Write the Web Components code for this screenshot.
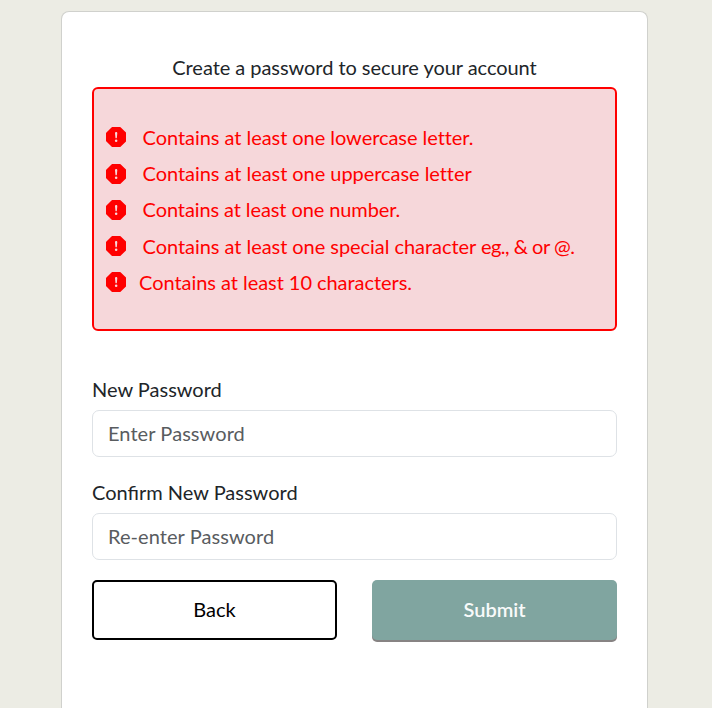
<!DOCTYPE html>
<html lang="en">
<head>
<meta charset="utf-8">
<title>Create a password</title>
<style>
    body {
        margin: 0;
        height: 708px;
        overflow: hidden;
        background: #ecece4;
        color: #212529;
        font: 20px/30px Lato, sans-serif;
    }
    .example {
        letter-spacing: -0.5px;
    }
</style>
</head>
<body>
<password-card>
    <span slot="title">Create a password to secure your account</span>
    <rule-list>
        <password-rule>Contains at least one lowercase letter.</password-rule>
        <password-rule>Contains at least one uppercase letter</password-rule>
        <password-rule style="letter-spacing: -0.1px">Contains at least one number.</password-rule>
        <password-rule>Contains at least one special character <span class="example">eg., &amp; or @.</span></password-rule>
        <password-rule style="--gap: 12.8px">Contains at least 10 characters.</password-rule>
    </rule-list>
    <password-field label="New Password" placeholder="Enter Password"></password-field>
    <password-field label="Confirm New Password" placeholder="Re-enter Password"></password-field>
    <form-actions>
        <action-button>Back</action-button>
        <action-button primary>Submit</action-button>
    </form-actions>
</password-card>

<script>
class PasswordCard extends HTMLElement {
    constructor() {
        super();
        this.attachShadow({ mode: "open" });
    }

    connectedCallback() {
        this.shadowRoot.innerHTML = `
        <style>
            :host {
                display: block;
                box-sizing: border-box;
                width: 587px;
                height: 697px;
                margin: 11px 0 0 61px;
                padding: 40px 30px 0;
                background: #fff;
                border: 1px solid #d0d1cd;
                border-bottom: 0;
                border-radius: 8px 8px 0 0;
            }
            header {
                height: 35px;
                text-align: center;
                letter-spacing: -0.05px;
            }
        </style>
        <header><slot name="title"></slot></header>
        <slot></slot>
        `;
    }
}
customElements.define("password-card", PasswordCard);

class RuleList extends HTMLElement {
    constructor() {
        super();
        this.attachShadow({ mode: "open" });
    }

    connectedCallback() {
        this.shadowRoot.innerHTML = `
        <style>
            :host {
                display: block;
                box-sizing: border-box;
                height: 244px;
                margin-bottom: 43px;
                padding: 30px 12px 0;
                background: #f6d7da;
                border: 2px solid #f00;
                border-radius: 6px;
                color: #f00;
                letter-spacing: -0.05px;
            }
        </style>
        <slot></slot>
        `;
    }
}
customElements.define("rule-list", RuleList);

class PasswordRule extends HTMLElement {
    constructor() {
        super();
        this.attachShadow({ mode: "open" });
    }

    connectedCallback() {
        this.shadowRoot.innerHTML = `
        <style>
            :host {
                display: flex;
                align-items: center;
                gap: var(--gap, 16.3px);
                height: 36.2px;
                white-space: nowrap;
            }
            svg {
                flex: none;
                margin-top: 0.6px;
            }
        </style>
        <svg width="20.3" height="20" viewBox="0 0 16 16" preserveAspectRatio="none" fill="currentColor">
            <path d="M11.46.146A.5.5 0 0 0 11.107 0H4.893a.5.5 0 0 0-.353.146L.146 4.54A.5.5 0 0 0 0 4.893v6.214a.5.5 0 0 0 .146.353l4.394 4.394a.5.5 0 0 0 .353.146h6.214a.5.5 0 0 0 .353-.146l4.394-4.394a.5.5 0 0 0 .146-.353V4.893a.5.5 0 0 0-.146-.353zM8 4c.535 0 .954.462.9.995l-.35 3.507a.552.552 0 0 1-1.1 0L7.1 4.995A.905.905 0 0 1 8 4m.002 6a1 1 0 1 1 0 2 1 1 0 0 1 0-2"/>
        </svg>
        <span><slot></slot></span>
        `;
    }
}
customElements.define("password-rule", PasswordRule);

class PasswordField extends HTMLElement {
    constructor() {
        super();
        this.attachShadow({ mode: "open" });
    }

    connectedCallback() {
        this.shadowRoot.innerHTML = `
        <style>
            :host {
                display: block;
                margin-bottom: 20px;
            }
            label {
                display: block;
                height: 36px;
            }
            input {
                display: block;
                box-sizing: border-box;
                width: 100%;
                height: 47px;
                padding: 0 15px 2px;
                border: 1px solid #dee2e6;
                border-radius: 7px;
                background: #fff;
                font: inherit;
                color: inherit;
                letter-spacing: 0.07px;
            }
            input::placeholder {
                color: #595c5f;
                opacity: 1;
            }
        </style>
        <label for="field">${this.getAttribute("label")}</label>
        <input id="field" placeholder="${this.getAttribute("placeholder")}">
        `;
    }
}
customElements.define("password-field", PasswordField);

class FormActions extends HTMLElement {
    constructor() {
        super();
        this.attachShadow({ mode: "open" });
    }

    connectedCallback() {
        this.shadowRoot.innerHTML = `
        <style>
            :host {
                display: flex;
                align-items: flex-start;
                justify-content: space-between;
            }
        </style>
        <slot></slot>
        `;
    }
}
customElements.define("form-actions", FormActions);

class ActionButton extends HTMLElement {
    constructor() {
        super();
        this.attachShadow({ mode: "open" });
    }

    connectedCallback() {
        this.shadowRoot.innerHTML = `
        <style>
            :host {
                display: block;
                width: 245px;
            }
            button {
                display: block;
                width: 100%;
                height: 60px;
                padding: 0 0 2px;
                background: #fff;
                border: 2px solid #000;
                border-radius: 5px;
                font: inherit;
                color: #000;
            }
            :host([primary]) button {
                background: #80a5a0;
                border: 0;
                box-shadow: 0 2px 0 #878383;
                color: #f8fafa;
                font-weight: 600;
            }
        </style>
        <button type="button"><slot></slot></button>
        `;
    }
}
customElements.define("action-button", ActionButton);
</script>
</body>
</html>
